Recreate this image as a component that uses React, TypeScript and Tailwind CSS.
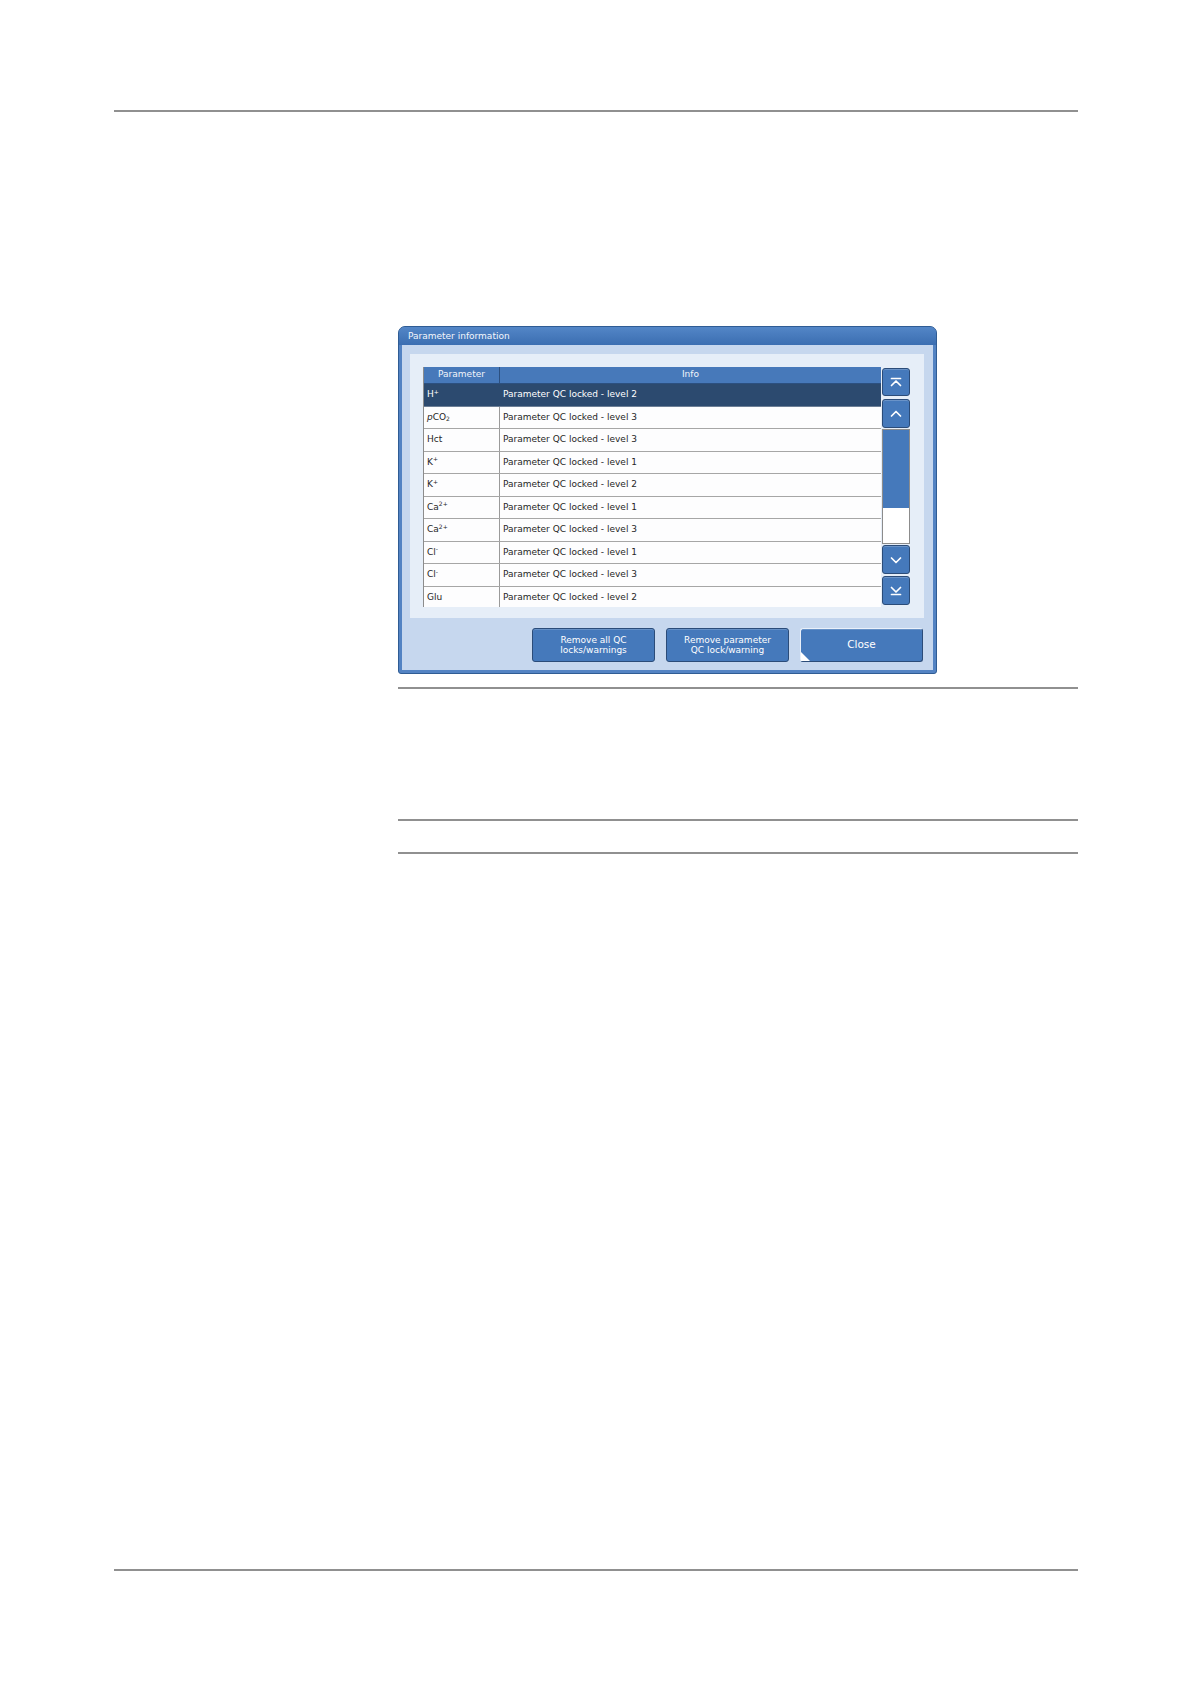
import type { ReactNode } from 'react';

type Row = { param: ReactNode; info: string; selected?: boolean };

const Sup = ({ children }: { children: ReactNode }) => (
  <span className="relative -top-[3px] text-[6px] leading-none">{children}</span>
);
const Sub = ({ children }: { children: ReactNode }) => (
  <span className="relative top-[2px] text-[6px] leading-none">{children}</span>
);

const ROWS: Row[] = [
  { param: <>H<Sup>+</Sup></>, info: 'Parameter QC locked - level 2', selected: true },
  { param: <><i>p</i>CO<Sub>2</Sub></>, info: 'Parameter QC locked - level 3' },
  { param: 'Hct', info: 'Parameter QC locked - level 3' },
  { param: <>K<Sup>+</Sup></>, info: 'Parameter QC locked - level 1' },
  { param: <>K<Sup>+</Sup></>, info: 'Parameter QC locked - level 2' },
  { param: <>Ca<Sup>2+</Sup></>, info: 'Parameter QC locked - level 1' },
  { param: <>Ca<Sup>2+</Sup></>, info: 'Parameter QC locked - level 3' },
  { param: <>Cl<Sup>-</Sup></>, info: 'Parameter QC locked - level 1' },
  { param: <>Cl<Sup>-</Sup></>, info: 'Parameter QC locked - level 3' },
  { param: 'Glu', info: 'Parameter QC locked - level 2' },
];

function ScrollBtn({ d, h }: { d: string; h: string }) {
  return (
    <div className={`${h} flex items-center justify-center rounded-[3px] border border-[#2b4c79] bg-[#4579bb] shadow-[inset_0_1px_0_rgba(255,255,255,0.2)]`}>
      <svg width="12" height="10" viewBox="0 0 12 10" fill="none" stroke="white" strokeWidth="1.7" strokeLinecap="round" strokeLinejoin="round">
        <path d={d} />
      </svg>
    </div>
  );
}

function DialogButton({ children, primary }: { children: ReactNode; primary?: boolean }) {
  return (
    <div
      className={
        'relative flex h-[34px] w-[123px] items-center justify-center rounded-[3px] border bg-[#4579bb] text-center text-white shadow-[inset_0_1px_0_rgba(255,255,255,0.18)] ' +
        (primary
          ? 'border-t-[#e9f0fa] border-l-[#e9f0fa] border-r-[#2b4c79] border-b-[#2b4c79] text-[10.5px]'
          : 'border-[#2b4c79] text-[9px] leading-[10px]')
      }
    >
      {children}
      {primary && (
        <svg className="absolute bottom-0 left-0" width="9" height="9" viewBox="0 0 9 9">
          <path d="M0 0L9 9H0Z" fill="white" />
        </svg>
      )}
    </div>
  );
}

export default function App() {
  return (
    <div className="flex h-[1684px] w-[1190px] flex-col bg-white pt-[110px] font-['DejaVu_Sans',sans-serif]">
      <div className="ml-[114px] h-[2px] w-[964px] bg-[#909090]" />

      <div className="ml-[398px] flex w-[680px] flex-col">
        {/* dialog */}
        <div className="mt-[214px] flex h-[348px] w-[539px] flex-col overflow-hidden rounded-t-[7px] rounded-b-[3px] border border-[#2f5c94] bg-[#5383c3]">
          <div className="flex h-[18px] items-center bg-gradient-to-b from-[#5386c7] to-[#3b6eb1] pl-[9px] pt-[2px] text-[9px] text-[#f4f7fc]">
            Parameter information
          </div>
          <div className="mx-[3px] mb-[3px] flex flex-1 flex-col bg-[#c6d7ee] pl-[8px] pr-[9px] pt-[9px]">
            <div className="flex h-[264px] w-[514px] bg-[#e6eef8] pl-[13px] pr-[14px] pt-[13px]">
              <div className="h-[240px] w-[458px] overflow-hidden border-l border-[#8c8c8c] bg-[#fdfdfe] text-[9px] text-[#262626]">
                <div className="flex h-[17px] items-center border-b border-[#2c5080] bg-[#4779ba] text-[#f2f5fa]">
                  <div className="flex h-full w-[76px] items-center justify-center border-r border-[#2c5080]">Parameter</div>
                  <div className="flex-1 text-center">Info</div>
                </div>
                {ROWS.map((r, i) => (
                  <div
                    key={i}
                    className={
                      'flex h-[22.5px] items-center border-b ' +
                      (r.selected ? 'border-[#6d7f96] bg-[#2c4a6f] text-white' : 'border-[#a6a6a6]')
                    }
                  >
                    <div className={'flex h-full w-[76px] items-center border-r pl-[3px] ' + (r.selected ? 'border-[#2c4a6f]' : 'border-[#9a9a9a]')}>
                      {r.param}
                    </div>
                    <div className="flex-1 pl-[3px]">{r.info}</div>
                  </div>
                ))}
              </div>
              <div className="ml-[1px] mt-[1px] flex w-[28px] flex-col">
                <ScrollBtn h="h-[28px]" d="M1.5 1.5h9M1.5 8.5L6 4l4.5 4.5" />
                <div className="mt-[3px]">
                  <ScrollBtn h="h-[29px]" d="M1.5 7L6 2.5 10.5 7" />
                </div>
                <div className="mt-[1px] flex h-[115px] flex-col border border-[#8c8c8c] bg-white">
                  <div className="h-[78px] bg-[#4579bb]" />
                </div>
                <div className="mt-[1px]">
                  <ScrollBtn h="h-[29px]" d="M1.5 3L6 7.5 10.5 3" />
                </div>
                <div className="mt-[2px]">
                  <ScrollBtn h="h-[29px]" d="M1.5 1.5L6 6l4.5-4.5M1.5 8.5h9" />
                </div>
              </div>
            </div>
            <div className="mt-[10px] flex w-[514px] justify-end gap-[11px] pr-[1px]">
              <DialogButton>
                Remove all QC
                <br />
                locks/warnings
              </DialogButton>
              <DialogButton>
                Remove parameter
                <br />
                QC lock/warning
              </DialogButton>
              <DialogButton primary>Close</DialogButton>
            </div>
          </div>
        </div>

        <div className="mt-[13px] h-[2px] w-[680px] bg-[#909090]" />
        <div className="mt-[130px] h-[2px] w-[680px] bg-[#909090]" />
        <div className="mt-[31px] h-[2px] w-[680px] bg-[#909090]" />
      </div>

      <div className="ml-[114px] mt-[715px] h-[2px] w-[964px] bg-[#909090]" />
    </div>
  );
}
